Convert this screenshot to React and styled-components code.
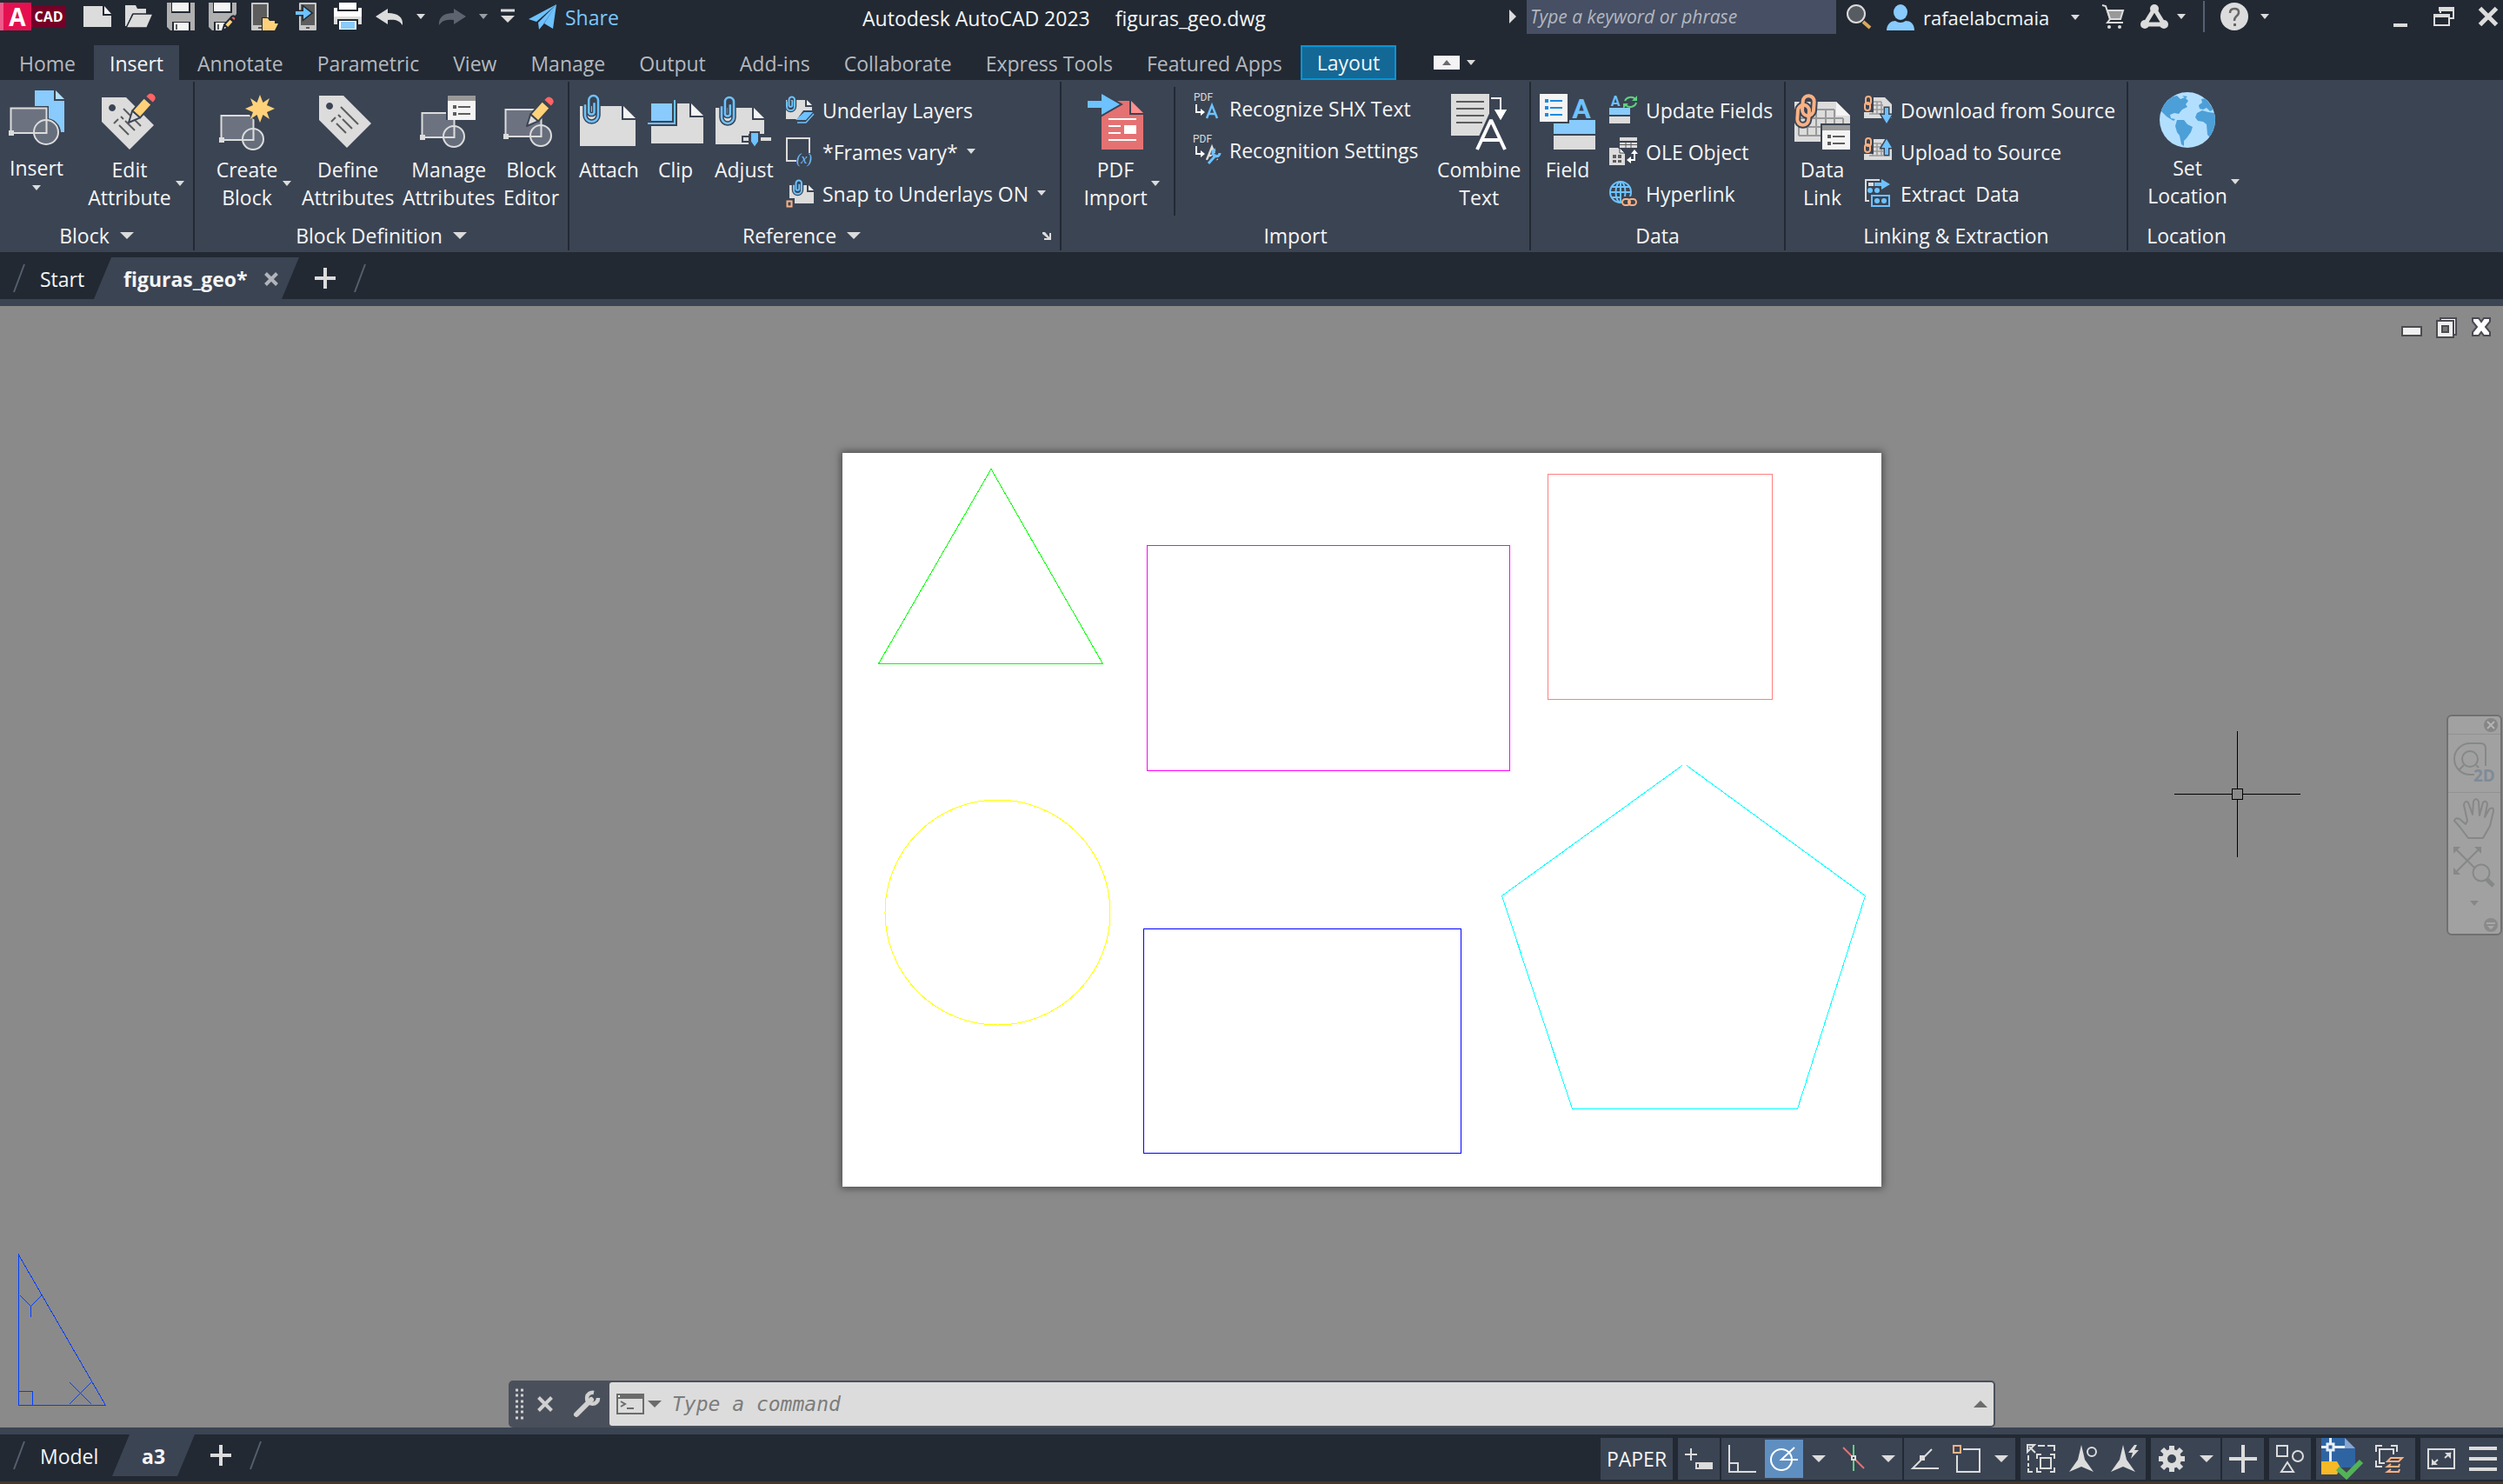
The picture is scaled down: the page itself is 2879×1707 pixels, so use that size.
import React from "react";
import styled, { createGlobalStyle } from "styled-components";

const c = {
  bar: "#222933",
  panel: "#3b4453",
  text: "#f5f5f5",
  muted: "#b5b9bf",
  light: "#dcdcdc",
  blue: "#88cbfc",
  sky: "#6dc2ff",
  yellow: "#ffd27a",
  red: "#ff6464",
  orange: "#f9b184",
  shade: "#6c7280",
  ink: "#5d5d5d",
};

const GlobalStyle = createGlobalStyle`
  * { box-sizing: border-box; }
  body { margin: 0; background: ${c.bar}; }
  body, button, input {
    font-family: "Open Sans", "Noto Sans", sans-serif;
    font-size: 23px;
    line-height: 32px;
  }
  button { margin: 0; padding: 0; border: 0; background: none; color: inherit; cursor: pointer; }
  svg { display: block; flex: none; }
`;

/* ---------- layout ---------- */

const Shell = styled.div`
  display: flex;
  flex-direction: column;
  min-height: 100vh;
  color: ${c.text};
  background: ${c.bar};
  border-bottom: 3px solid #40382f;
  white-space: nowrap;
`;

const TitleBar = styled.header`
  display: flex;
  align-items: center;
  height: 38px;
  margin-bottom: 14px;
`;

const Logo = styled.div`
  display: flex;
  align-items: center;
  margin-right: 12px;
  font-weight: 700;
`;

const LogoMark = styled.span`
  width: 36px;
  height: 32px;
  border-left: 4px solid #f0588a;
  background: #e51050;
  color: #fff;
  font-size: 28px;
  line-height: 32px;
  text-align: center;
`;

const LogoName = styled.span`
  width: 40px;
  height: 24px;
  background: #760027;
  color: #fff;
  font-size: 16px;
  line-height: 24px;
  text-align: center;
`;

const BarButton = styled.button`
  display: flex;
  align-items: center;
  justify-content: center;
  flex: none;
  width: ${(p) => p.$w || 48}px;
  height: 38px;
`;

const ShareButton = styled.button`
  display: flex;
  align-items: center;
  gap: 10px;
  padding: 2px 8px 0;
  color: #7bc8ff;
`;

const WindowTitle = styled.div`
  display: flex;
  flex: 1;
  justify-content: center;
  gap: 29px;
  padding-top: 4px;
`;

const SearchInput = styled.input`
  width: 356px;
  height: 39px;
  margin-left: 4px;
  padding: 0 4px;
  border: 0;
  background: #464f63;
  color: ${c.text};
  font-size: 21px;
  font-style: italic;
  &::placeholder { color: #b3b7c0; opacity: 1; }
`;

const AccountButton = styled.button`
  display: flex;
  align-items: center;
  gap: 10px;
  width: 236px;
  padding: 2px 8px 0 6px;
  font-size: 22px;
  & > :last-child { margin-left: auto; }
`;

const BarDivider = styled.span`
  width: 2px;
  height: 36px;
  margin: 0 14px 0 10px;
  background: #566075;
`;

const WindowButtons = styled.div`
  display: flex;
  margin-left: 116px;
  & > :last-child { margin-left: 8px; }
`;

const TabRow = styled.nav`
  display: flex;
  gap: 3px;
  height: 40px;
  padding-left: 4px;
`;

const RibbonTab = styled.button`
  padding: 2px 18px 0;
  color: ${(p) => (p.$active ? c.text : c.muted)};
  background: ${(p) => (p.$active ? c.panel : "none")};
`;

const ContextTab = styled(RibbonTab)`
  color: ${c.text};
  background: #146896;
  border: 2px solid #0696d7;
  padding: 0 17px;
`;

const RibbonToggle = styled.div`
  display: flex;
  align-items: center;
  gap: 8px;
  margin-left: 40px;
`;

const ToggleBox = styled.button`
  display: flex;
  align-items: center;
  justify-content: center;
  width: 30px;
  height: 16px;
  background: #f4f4f4;
`;

const Ribbon = styled.section`
  display: flex;
  padding: 2px 0;
  background: ${c.panel};
`;

const Panel = styled.section`
  display: flex;
  flex-direction: column;
  flex: none;
  width: ${(p) => p.$w}px;
  border-right: ${(p) => (p.$last ? "0" : `2px solid ${c.bar}`)};
`;

const PanelBody = styled.div`
  display: flex;
  gap: ${(p) => p.$gap || 12}px;
  height: 161px;
  padding: 0 ${(p) => (p.$last ? 0 : 10)}px 0 ${(p) => p.$pad || 10}px;
`;

const PanelTitle = styled.div`
  display: flex;
  align-items: center;
  justify-content: center;
  height: 32px;
  margin-bottom: 1px;
`;

const TitleButton = styled.button`
  display: flex;
  flex: 1;
  align-items: center;
  justify-content: center;
  gap: 12px;
`;

const Launcher = styled.button`
  display: flex;
  justify-content: center;
  width: 30px;
`;

const Tool = styled.button`
  display: flex;
  flex-direction: column;
  align-items: center;
  flex: none;
  gap: 7px;
  width: ${(p) => p.$w}px;
  padding-top: ${(p) => (p.$raised ? 12 : 14)}px;
`;

const ToolLabel = styled.span`
  display: grid;
  grid-template-columns: 1fr auto 1fr;
  align-items: center;
  width: 100%;
  & > :nth-child(2) { text-align: center; white-space: pre; }
  & > :nth-child(3) { justify-self: end; }
`;

const ToolStack = styled.span`
  display: flex;
  flex-direction: column;
  align-items: center;
  gap: 4px;
`;

const List = styled.div`
  display: flex;
  flex: 1;
  flex-direction: column;
  align-items: flex-start;
  padding-top: ${(p) => (p.$tight ? 6 : 8)}px;
  margin-left: 4px;
`;

const ListButton = styled.button`
  display: flex;
  align-items: center;
  gap: 10px;
  height: 48px;
`;

const ListText = styled.span`
  padding-top: 2px;
  white-space: pre;
`;

const InnerDivider = styled.span`
  width: 2px;
  height: 148px;
  margin: 6px 4px 0 4px;
  background: ${c.bar};
`;

const DocTabs = styled.div`
  display: flex;
  align-items: center;
  padding: 6px 0 0 15px;
  border-bottom: 8px solid ${c.panel};
`;

const PlainTab = styled.button`
  width: ${(p) => p.$w}px;
  height: 48px;
  padding: 2px 0 0 17px;
  text-align: left;
`;

const SlantTab = styled.div`
  display: flex;
  align-items: center;
  justify-content: space-between;
  width: ${(p) => p.$w}px;
  height: 48px;
  padding: 2px 24px 0 34px;
  background: ${c.panel};
  clip-path: polygon(20px 0, 100% 0, calc(100% - 20px) 100%, 0 100%);
  font-weight: 700;
`;

const AddButton = styled.button`
  display: flex;
  margin: 0 21px 0 18px;
`;

const Canvas = styled.main`
  position: relative;
  flex: 1;
  min-height: 1100px;
  background: #8a8a8a;
`;

const Paper = styled.div`
  position: absolute;
  left: 969px;
  top: 169px;
  background: #fff;
  box-shadow: 0 0 8px 2px rgba(40, 40, 40, 0.6);
`;

const Ucs = styled.div`
  position: absolute;
  left: 20px;
  bottom: 24px;
`;

const Crosshair = styled.div`
  position: absolute;
  left: 2501px;
  top: 489px;
`;

const ViewControls = styled.div`
  position: absolute;
  right: 13px;
  top: 12px;
  display: flex;
  gap: 16px;
`;

const NavBar = styled.div`
  position: absolute;
  right: 1px;
  top: 470px;
  display: flex;
  flex-direction: column;
  align-items: center;
  width: 64px;
  border: 2px solid #707070;
  border-radius: 6px;
  background: #a1a1a1;
`;

const NavCorner = styled.button`
  align-self: flex-end;
  display: flex;
  padding: 2px 3px 2px 0;
`;

const NavButton = styled.button`
  display: flex;
  justify-content: center;
  width: 100%;
  padding: ${(p) => p.$y || 4}px 0;
  border-top: ${(p) => (p.$line ? "1px solid #929292" : "0")};
`;

const CommandBar = styled.div`
  position: absolute;
  left: 585px;
  right: 584px;
  bottom: 0;
  display: flex;
  align-items: center;
  height: 54px;
  padding: 2px 2px 2px 8px;
  border-radius: 5px;
  background: #4a505b;
`;

const CommandTool = styled.button`
  display: flex;
  margin-left: ${(p) => p.$ml}px;
`;

const CommandField = styled.label`
  display: flex;
  flex: 1;
  align-items: center;
  height: 50px;
  margin-left: 11px;
  padding: 0 7px 0 8px;
  border-radius: 3px;
  background: #dcdcdc;
`;

const CommandInput = styled.input`
  flex: 1;
  margin: 0 12px;
  padding: 0;
  border: 0;
  background: none;
  color: #333;
  font-family: "DejaVu Sans Mono", monospace;
  font-size: 23px;
  font-style: italic;
  &::placeholder { color: #7c7c7c; opacity: 1; }
`;

const StatusBar = styled.footer`
  display: flex;
  justify-content: space-between;
  height: 62px;
  border-top: 8px solid ${c.panel};
`;

const LayoutTabs = styled.div`
  display: flex;
  align-items: center;
  height: 48px;
  padding-left: 15px;
`;

const StatusGroups = styled.div`
  display: flex;
  padding-top: 4px;
`;

const Group = styled.div`
  display: flex;
  height: 48px;
  margin-left: ${(p) => (p.$near ? 2 : 6)}px;
  padding: 0 ${(p) => p.$pad || 0}px;
  gap: ${(p) => p.$pad || 0}px;
  background: ${c.panel};
`;

const StatusButton = styled.button`
  display: flex;
  align-items: center;
  justify-content: center;
  width: ${(p) => p.$w || 48}px;
  height: 48px;
  border: ${(p) => (p.$on ? `2px solid ${c.panel}` : "0")};
  background: ${(p) => (p.$on ? "#5f8fc1" : "none")};
`;

const PaperButton = styled.button`
  width: 83px;
`;

/* ---------- icons ---------- */

const Icon = ({ s = 32, w, h, vb, children, ...rest }) => (
  <svg width={w || s} height={h || s} viewBox={vb || `0 0 ${w || s} ${h || s}`} fill="none" aria-hidden="true" overflow="visible" {...rest}>
    {children}
  </svg>
);

const Caret = ({ w = 10, h = 6, color = c.light }) => (
  <Icon w={w} h={h}><path d={`M0 0H${w}L${w / 2} ${h}Z`} fill={color} /></Icon>
);

const CaretUp = ({ w = 16, h = 8, color = "#6b6b6b" }) => (
  <Icon w={w} h={h}><path d={`M0 ${h}H${w}L${w / 2} 0Z`} fill={color} /></Icon>
);

const Slash = () => (
  <Icon w={14} h={32}><path d="M13 0L1 32" stroke="#56606e" strokeWidth="2" /></Icon>
);

const Plus = () => (
  <Icon s={24}><path d="M12 0V24M0 12H24" stroke={c.light} strokeWidth="4" /></Icon>
);

const Pencil = ({ x, y, k = 1, edge = c.panel }) => (
  <g transform={`translate(${x} ${y}) rotate(42) scale(${k})`} stroke={edge} strokeWidth={2 / k} strokeLinejoin="round">
    <path d="M0 0L-6 -13H6Z" fill={c.light} />
    <path d="M-6 -13V-33H6V-13Z" fill={c.yellow} />
    <path d="M-6 -35V-38Q-6 -44 0 -44Q6 -44 6 -38V-35Z" fill={c.red} />
  </g>
);

const Block = ({ y = 25, w = 37, h = 28, r = 12 }) => (
  <g>
    <rect x="2.5" y={y} width={w} height={h} fill={c.shade} stroke={c.light} strokeWidth="2" />
    <circle cx={w + 2} cy={y + h - 1} r={r} fill={c.shade} fillOpacity=".9" stroke={c.light} strokeWidth="2" />
    <path d={`M${w + 2.5} ${y + h - r}V${y + h}H${w + 2 - r}`} stroke={c.light} strokeWidth="2" />
    <rect x="0" y={y + h - 3} width="6" height="6" fill={c.light} />
  </g>
);

const Clip = ({ x = 0, y = 0, w = 16, h = 32, sw = 2.5 }) => {
  const r = w / 2;
  const d = `M${w * 0.7} ${h * 0.3}V${h * 0.66}A${r * 0.45} ${r * 0.45} 0 0 1 ${w * 0.28} ${h * 0.66}V${r * 0.85}A${r * 0.7} ${r * 0.7} 0 0 1 ${w} ${r * 0.85}V${h - r}A${r} ${r} 0 0 1 0 ${h - r}V${h * 0.36}`;
  return (
    <g transform={`translate(${x} ${y})`}>
      <path d={d} stroke={c.panel} strokeWidth={sw * 2.2} />
      <path d={d} stroke={c.sky} strokeWidth={sw} />
    </g>
  );
};

const Sheet = ({ x = 0, y = 0, w, h, f, fill = c.light, corner = "#f4f4f4" }) => (
  <g transform={`translate(${x} ${y})`}>
    <path d={`M0 0H${w - f - 2}V${f + 2}H${w}V${h}H0Z`} fill={fill} />
    <path d={`M${w - f} 0L${w} ${f}H${w - f}Z`} fill={corner} />
  </g>
);

const ListWindow = ({ x, y, w = 32, h = 28 }) => (
  <g transform={`translate(${x} ${y})`}>
    <rect x="-2" y="-2" width={w + 2} height={h + 2} fill={c.panel} />
    <rect width={w} height={h} fill="#f4f4f4" />
    <rect width={w} height="6" fill="#999" />
    <path d="M6 13H10M6 21H10" stroke={c.ink} strokeWidth="4" />
    <path d="M12 13H26M12 21H26" stroke={c.ink} strokeWidth="2" />
  </g>
);

const InsertIcon = () => (
  <Icon s={64}>
    <g transform="translate(0 -2)">
      <path d="M30 0H52V12H64V48H30Z" fill={c.blue} />
      <path d="M54 0L64 10H54Z" fill="#b3dfff" />
      <rect x="0" y="18" width="46" height="34" fill={c.panel} />
      <circle cx="43" cy="49" r="17" fill={c.panel} />
      <Block y={20.5} w={41} h={28.5} r={14} />
    </g>
  </Icon>
);

const tagBody = "M0 2H28L60 34L32 62L0 30ZM12 10a4 4 0 1 0 .1 0Z";

const TagIcon = ({ pencil }) => (
  <Icon s={64}>
    <g transform={pencil ? "translate(0 2)" : undefined}>
      <path d={tagBody} fill={c.light} fillRule="evenodd" />
      <path d="M25 15L45 35M22 24L25 27M27 29L38 40M19 27L14 32M20 34L31 45" stroke={c.ink} strokeWidth="2" />
    </g>
    {pencil && <Pencil x={31} y={33} />}
  </Icon>
);

const CreateBlockIcon = () => (
  <Icon s={64}>
    <Block />
    <circle cx="47" cy="17" r="14" fill={c.panel} />
    <path d="M47 1L50.500 10L58 5L55 13L64 17L55 21L58 29L50.500 24L47 33L43.500 24L36 29L39 21L30 17L39 13L36 5L43.500 10Z" fill={c.yellow} />
  </Icon>
);

const ManageIcon = () => (
  <Icon s={64}><Block y={22} /><ListWindow x={32} y={2} /></Icon>
);

const EditorIcon = () => (
  <Icon s={64}><Block y={18} w={41} h={31} /><Pencil x={27} y={37} /></Icon>
);

const AttachIcon = () => (
  <Icon s={64}><Sheet y={14} w={64} h={46} f={14} /><Clip x={6} y={1} w={15} h={31} /></Icon>
);

const ClipIcon = () => (
  <Icon s={64}>
    <Sheet x={4} y={11} w={60} h={46} f={14} />
    <path d="M0 34H31V7" stroke={c.panel} strokeWidth="6" />
    <rect x="4" y="11" width="24" height="20" fill={c.blue} />
    <path d="M0 34H31V7" stroke={c.sky} strokeWidth="2" />
  </Icon>
);

const AdjustIcon = () => (
  <Icon s={64}>
    <Sheet y={16} w={56} h={42} f={12} />
    <Clip x={7} y={3} w={14} h={31} />
    <rect x="38" y="46" width="26" height="12" fill={c.panel} />
    <path d="M44 49H31V55H44" stroke={c.panel} strokeWidth="2" />
    <rect x="52" y="50" width="12" height="4" fill={c.light} />
    <path d="M40 44H50V55L45 62L40 55Z" fill={c.sky} stroke={c.panel} strokeWidth="2" />
  </Icon>
);

const LayersIcon = () => (
  <Icon>
    <Sheet y={5} w={30} h={22} f={6} />
    <Clip x={1} y={1} w={9} h={16} sw={2} />
    <path d="M10 31L20 17H34V22L26 34H10Z" fill={c.panel} />
    <path d="M21 19H31L23 28H11Z" fill={c.sky} />
    <path d="M13 31H23L32 21" stroke={c.sky} strokeWidth="1.500" />
  </Icon>
);

const FramesIcon = () => (
  <Icon>
    <path d="M12 27H1V1H27V18" stroke={c.light} strokeWidth="2" />
    <text x="12" y="30" fill={c.sky} fontFamily="Liberation Serif, serif" fontStyle="italic" fontSize="16">(x)</text>
  </Icon>
);

const SnapIcon = () => (
  <Icon>
    <Sheet x={4} y={7} w={28} h={21} f={6} />
    <Clip x={9} y={1} w={9} h={16} sw={2} />
    <rect x="-2" y="22" width="12" height="12" fill={c.panel} />
    <rect x="1.500" y="25.500" width="5" height="6" stroke={c.orange} strokeWidth="2" />
  </Icon>
);

const PdfIcon = () => (
  <Icon s={64}>
    <Sheet x={16} y={8} w={48} h={56} f={14} fill="#e57272" corner="#ff8f8f" />
    <path d="M0 8H16V0L37 12L16 24V16H0Z" fill={c.sky} stroke={c.panel} strokeWidth="4" paintOrder="stroke" />
    <path d="M24 29H56M24 37H38M24 45H38M24 53H56" stroke="#fff" strokeWidth="2" />
    <rect x="42" y="36" width="14" height="10" fill="#fff" />
  </Icon>
);

const ShxIcon = ({ wrench }) => (
  <Icon>
    <text x={wrench ? 0 : 1} y="8" fill={c.light} fontSize="12" fontFamily="Roboto, sans-serif">PDF</text>
    <path d="M4 12V21H10" stroke="#fff" strokeWidth="2" />
    <path d="M9 17L14 21L9 25Z" fill="#fff" />
    <path d="M16 28L22 13L28 28M18 23H26" stroke={wrench ? c.light : c.sky} strokeWidth="2.500" />
    {wrench && <path d="M18 32L28 22" stroke={c.panel} strokeWidth="7" />}
    {wrench && <path d="M18 32L27 22M31 20a4 4 0 1 1 -5 -4" stroke={c.sky} strokeWidth="3" />}
  </Icon>
);

const CombineIcon = () => (
  <Icon s={64}>
    <path d="M0 0H44V26L34 48H0Z" fill={c.light} />
    <path d="M6 9H38M6 17H38M6 25H38M6 33H36" stroke={c.ink} strokeWidth="2" />
    <path d="M46 5H57V20" stroke="#fff" strokeWidth="2" />
    <path d="M50 18H64L57 30Z" fill="#fff" />
    <path d="M30 64L46 29L62 64" stroke={c.panel} strokeWidth="9" />
    <path d="M50 18H64L57 30Z" fill="#fff" />
    <path d="M30 64L46 30L62 64M36 53H56" stroke="#fff" strokeWidth="4" strokeLinejoin="bevel" />
  </Icon>
);

const FieldIcon = () => (
  <Icon s={64}>
    <rect x="16" y="30" width="48" height="16" fill={c.blue} />
    <rect x="-2" y="-2" width="36" height="36" fill={c.panel} />
    <rect width="32" height="32" fill="#f4f4f4" />
    <path d="M6 8H10M6 16H10M6 24H10" stroke="#1c8be0" strokeWidth="4" />
    <path d="M12 8H26M12 16H26M12 24H26" stroke="#1c8be0" strokeWidth="2" />
    <text x="48" y="28" textAnchor="middle" fill={c.sky} fontSize="32" fontWeight="700" fontFamily="Roboto, sans-serif">A</text>
    <rect x="16" y="48" width="48" height="16" fill={c.light} />
  </Icon>
);

const UpdateFieldsIcon = () => (
  <Icon>
    <text x="7" y="12" textAnchor="middle" fill={c.sky} fontSize="16" fontWeight="700" fontFamily="Roboto, sans-serif">A</text>
    <path d="M18 6a7 6 0 0 1 12 -2M31 8a7 6 0 0 1 -12 3" stroke="#5fd27f" strokeWidth="2" />
    <path d="M32 0V6H26ZM16 15V9H22Z" fill="#5fd27f" />
    <rect y="14" width="24" height="8" fill={c.blue} />
    <rect y="24" width="24" height="8" fill={c.light} />
  </Icon>
);

const OleIcon = () => (
  <Icon>
    <rect x="12" y="0" width="20" height="4" fill={c.light} />
    <path d="M12 6H32V12H12Z" fill={c.light} />
    <path d="M12 8.500H32M19 6V12M25 6V12" stroke={c.ink} strokeWidth="1" />
    <path d="M0 12H10L18 19V32H0Z" fill={c.light} />
    <path d="M12 12L18 18H12Z" fill="#fff" stroke={c.panel} strokeWidth="1" />
    <path d="M4 20H8V24H4ZM10 20H14V24H10ZM4 26H8V29H4ZM10 26H14V29H10Z" fill={c.ink} />
    <path d="M29 18V26H24" stroke="#fff" strokeWidth="2" />
    <path d="M25 19L29 14L33 19ZM25 22L20 26L25 30Z" fill="#fff" />
  </Icon>
);

const Chain = ({ t, sw = 3 }) => (
  <g transform={t}>
    <rect x="6" y="1" width="13" height="23" rx="6.500" stroke={c.panel} strokeWidth={sw + 4} />
    <rect x="1" y="12" width="13" height="23" rx="6.500" stroke={c.panel} strokeWidth={sw + 4} />
    <rect x="6" y="1" width="13" height="23" rx="6.500" stroke={c.orange} strokeWidth={sw} />
    <rect x="1" y="12" width="13" height="23" rx="6.500" stroke={c.orange} strokeWidth={sw} />
  </g>
);

const HyperlinkIcon = () => (
  <Icon>
    <g stroke={c.sky} strokeWidth="2">
      <circle cx="13" cy="15" r="12" />
      <ellipse cx="13" cy="15" rx="5.500" ry="12" />
      <path d="M13 3V27M1 15H25M3 9H23M3 21H23" />
    </g>
    <rect x="14" y="20" width="20" height="12" fill={c.panel} />
    <rect x="15" y="23" width="9" height="7" rx="3.500" stroke={c.orange} strokeWidth="2" />
    <rect x="22" y="23" width="9" height="7" rx="3.500" stroke={c.orange} strokeWidth="2" />
  </Icon>
);

const DataLinkIcon = () => (
  <Icon s={64}>
    <path d="M0 9H48L64 25V55H0Z" fill={c.light} />
    <path d="M48 9L64 25H48Z" fill="#f4f4f4" />
    <path d="M5 48H30M5 38H30M5 28H56M25 18H46M5 28V48M15 28V48M25 18V48M36 18V38M46 18V38M56 28V38" stroke="#999" strokeWidth="2" />
    <Chain t="translate(3 1) rotate(4 10 18)" sw={4} />
    <ListWindow x={32} y={36} />
  </Icon>
);

const SourceIcon = ({ up }) => (
  <Icon>
    <path d="M0 2H24L32 10V26H0Z" fill={c.light} />
    <path d="M6 21H22M6 16H22M6 11H22M10 7H20M10 7V21M15 7V21M20 7V21" stroke="#999" strokeWidth="1.500" />
    <rect x="-1" y="-1" width="12" height="20" fill={c.panel} />
    <rect x="2" y="1" width="6" height="9" rx="3" stroke={c.orange} strokeWidth="2" />
    <rect x="1" y="8" width="6" height="9" rx="3" stroke={c.orange} strokeWidth="2" />
    <path
      d={up ? "M26 2L32 12H28V20H24V12H20Z" : "M26 32L32 22H28V14H24V22H20Z"}
      fill={c.sky} stroke={c.panel} strokeWidth="3" paintOrder="stroke"
    />
  </Icon>
);

const ExtractIcon = () => (
  <Icon>
    <path d="M18 1H2V25H6" stroke={c.light} strokeWidth="2" />
    <rect x="5" y="4" width="6" height="4" fill={c.light} />
    <path d="M12 4H20V0L30 6L20 12V8H12Z" fill={c.sky} />
    <circle cx="7" cy="13" r="3" fill={c.sky} /><circle cx="15" cy="13" r="3" fill={c.sky} />
    <rect x="9" y="19" width="20" height="12" fill={c.panel} stroke={c.sky} strokeWidth="2" />
    <circle cx="15" cy="25" r="3" fill={c.sky} /><circle cx="23" cy="25" r="3" fill={c.sky} />
  </Icon>
);

const GlobeIcon = () => (
  <Icon s={64}>
    <clipPath id="globe"><circle cx="32" cy="32" r="32" /></clipPath>
    <circle cx="32" cy="32" r="32" fill="#b3dfff" />
    <g clipPath="url(#globe)" fill="#4d9fd8">
      <path d="M12 6L20 4L24 8L29 6L33 10L30 14L32 17L26 20L22 25L17 24L12 26L13 30L18 31L16 33L8 28L4 24L0 20Z" />
      <path d="M20 32L28 32L32 37L38 40L36 46L31 53L28 56L28 62L25 60L23 50L20 46L18 39Z" />
      <path d="M43 24L49 21L56 23L64 24V40L58 52L55 49L54 37L50 34L44 33L41 29Z" />
      <path d="M46 19L45 15L49 12L48 8L53 7L62 20L58 22L54 18L50 20Z" />
      <path d="M26 4L32 5L30 7Z" />
    </g>
  </Icon>
);

const FileNew = () => <Icon><path d="M0 4H22V15H32V28H0Z" fill={c.light} /><path d="M24 4L32 13H24Z" fill="#f4f4f4" /></Icon>;
const FileOpen = () => <Icon><path d="M0 3H12L14 7H24V13H8L2 27H0Z" fill={c.light} /><path d="M9 13H32L25 29H1Z" fill={c.light} stroke={c.bar} strokeWidth="1.500" /></Icon>;
const Save = ({ edit }) => (
  <Icon>
    <path d="M0 0H5V13H27V0H32V32H27V21H6V32H4L0 28Z" fill="#b0b0b0" />
    <rect x="5" y="12" width="22" height="10" fill="#b0b0b0" />
    <rect x="6" y="0" width="19" height="10" fill="#f4f4f4" />
    <rect x="8" y="23" width="17" height="9" fill="#f4f4f4" />
    <path d="M11 25V31" stroke={c.ink} strokeWidth="2" />
    {edit && <path d="M15 34L32 13V34Z" fill={c.bar} />}
    {edit && <Pencil x={16} y={32} k={0.48} edge={c.bar} />}
  </Icon>
);
const Mobile = ({ save }) => (
  <Icon>
    <rect x={save ? 8 : 1} y="0" width="20" height="32" rx="1" fill="#c8c8c8" />
    <rect x={save ? 10 : 3} y="2" width="16" height="24" fill={c.ink} />
    <rect x={save ? 16 : 9} y="28" width="4" height="2" fill={c.ink} />
    {save
      ? <path d="M4 10H13V5L22 12L13 19V14H4Z" fill={c.sky} stroke={c.bar} strokeWidth="3" paintOrder="stroke" />
      : <path d="M14 18H20L22 21H28V24H32L28 32H14Z" fill={c.yellow} stroke={c.bar} strokeWidth="2" paintOrder="stroke" />}
  </Icon>
);
const Print = () => (
  <Icon>
    <rect x="6" y="0" width="20" height="8" fill="#fff" />
    <path d="M0 6H4V10H28V6H32V16H0Z" fill="#fff" />
    <rect y="16" width="32" height="9" fill={c.light} />
    <rect x="5" y="20" width="22" height="12" fill="#fff" stroke={c.bar} strokeWidth="2" />
    <rect x="8" y="22" width="16" height="8" fill={c.blue} />
  </Icon>
);
const Undo = ({ flip, color = c.light }) => (
  <Icon><path transform={flip ? "translate(32 0) scale(-1 1)" : undefined} d="M0 16L14 7V12C26 12 32 17 31 26C27 20 22 19 14 20V25Z" fill={color} /></Icon>
);
const Customize = () => <Icon w={16} h={16}><path d="M0 1H16" stroke={c.light} strokeWidth="3" /><path d="M0 7H16L8 15Z" fill={c.light} /></Icon>;
const Send = () => <Icon><path d="M32 1L0 18L9 21ZM32 1L11 22L12 30L17 24ZM32 1L18 23L28 29Z" fill={c.sky} /></Icon>;
const Search = () => <Icon s={28}><path d="M19 20L27 27" stroke="#dba95c" strokeWidth="4" /><circle cx="11" cy="11" r="10" fill="#575c63" stroke={c.light} strokeWidth="2" /></Icon>;
const User = () => <Icon><ellipse cx="16" cy="10" rx="8" ry="9" fill={c.blue} /><path d="M0 31C0 23 6 20 10 20Q16 24 22 20C27 20 32 23 32 31Z" fill={c.blue} /></Icon>;
const Cart = () => (
  <Icon w={26} h={28}>
    <path d="M6 7H24L21 17H9Z" fill="#999" stroke={c.light} strokeWidth="2" />
    <path d="M0 1L4 2L9 17L6 21H24" stroke={c.light} strokeWidth="2" />
    <circle cx="8" cy="26" r="2" fill={c.light} /><circle cx="20" cy="26" r="2" fill={c.light} />
  </Icon>
);
const AppStore = () => (
  <Icon w={32} h={28}>
    <path d="M16 5L5 23H27Z" stroke={c.light} strokeWidth="5" />
    <circle cx="16" cy="5" r="5" fill={c.light} /><circle cx="5" cy="23" r="5" fill={c.light} /><circle cx="27" cy="23" r="5" fill={c.light} />
  </Icon>
);
const Help = () => (
  <Icon>
    <circle cx="16" cy="16" r="16" fill={c.light} />
    <path d="M11 12Q11 7 16 7Q21 7 21 11Q21 14 18 16Q16 18 16 21" stroke="#666" strokeWidth="2.500" />
    <rect x="15" y="24" width="3" height="3" fill="#666" />
  </Icon>
);
const Minimize = () => <Icon w={16} h={24}><rect y="20" width="16" height="4" fill={c.light} /></Icon>;
const Restore = () => (
  <Icon w={24} h={22}>
    <path d="M8 7V2H23V13H18" stroke={c.light} strokeWidth="2" /><path d="M6 2.500H24" stroke={c.light} strokeWidth="5" />
    <rect x="1" y="9" width="17" height="12" fill={c.bar} stroke={c.light} strokeWidth="2" /><path d="M0 10H19" stroke={c.light} strokeWidth="4" />
  </Icon>
);
const Cross = ({ s = 16, sw = 4, color = "#b0b4bb" }) => (
  <Icon s={s}><path d={`M1.500 1.500L${s - 1.5} ${s - 1.5}M${s - 1.5} 1.500L1.500 ${s - 1.5}`} stroke={color} strokeWidth={sw} /></Icon>
);
const LaunchIcon = () => <Icon s={10}><path d="M0 1H3L8 7V2H10V10H2V8H6L0 3Z" fill={c.light} /></Icon>;

/* ---------- canvas drawings ---------- */

const PaperDrawing = () => (
  <Icon w={1195} h={844} vb="969 521 1195 844" shapeRendering="crispEdges" role="img" aria-label="Geometric figures">
    <path d="M1140 539.500L1010.500 763.500H1268.500Z" stroke="#00ff00" />
    <rect x="1319.500" y="627.500" width="417" height="259" stroke="#ff00ff" />
    <rect x="1780.500" y="545.500" width="258" height="259" stroke="#ff7f7f" />
    <circle cx="1147.500" cy="1049.500" r="129.500" stroke="#ffff00" />
    <rect x="1315.500" y="1068.500" width="365" height="258" stroke="#0000ff" />
    <path d="M1935 880.500L1727.500 1030.500L1808.500 1275.500H2067.500L2145.500 1030.500L1940 880.500" stroke="#00ffff" />
  </Icon>
);

const UcsDrawing = () => (
  <Icon w={102} h={176} vb="20 1442 102 176" stroke="#0040ff" shapeRendering="crispEdges">
    <path d="M21.500 1443.500V1616.500H121.500ZM21.500 1600.500H37.500V1616.500" />
    <path d="M23 1490L35.500 1502.500L48 1490M35.500 1502.500V1515M80 1590L105 1615M80 1615L106 1589" />
  </Icon>
);

const CrosshairDrawing = () => (
  <Icon s={145} stroke="#000" shapeRendering="crispEdges">
    <path d="M0 72.500H66M79 72.500H145M72.500 0V66M72.500 79V145M66.500 66.500H78.500V78.500H66.500Z" />
  </Icon>
);

const ViewMin = () => <Icon s={24}><rect x="1" y="12" width="22" height="10" fill="#f0f0f0" stroke="#4a4a52" strokeWidth="2" /></Icon>;
const ViewRestore = () => (
  <Icon s={24}>
    <rect x="5" y="2" width="18" height="19" fill="#fff" stroke="#4a4a52" strokeWidth="2" />
    <rect x="1" y="5" width="19" height="19" fill="#eee" stroke="#4a4a52" strokeWidth="2" />
    <rect x="7" y="11" width="7" height="7" fill="#777" stroke="#4a4a52" strokeWidth="2" />
  </Icon>
);
const ViewClose = () => (
  <Icon s={24}>
    <path d="M2 2H9L12 6L15 2H22V6L17 12L22 18V22H15L12 18L9 22H2V18L7 12L2 6Z" fill="#fff" stroke="#4a4a52" strokeWidth="2" />
  </Icon>
);

const NavClose = () => <Icon s={16}><circle cx="8" cy="8" r="8" fill="#868686" /><path d="M4 4L12 12M12 4L4 12" stroke="#b4b4b4" strokeWidth="2" /></Icon>;
const NavMenu = () => <Icon s={16}><circle cx="8" cy="8" r="8" fill="#8a8a8a" /><path d="M3 6H13" stroke="#a8a8a8" strokeWidth="2" /><path d="M4 9H12L8 13Z" fill="#a8a8a8" /></Icon>;
const Wheel = () => (
  <Icon s={48} stroke="#868888" strokeWidth="2">
    <path d="M37 27V7Q37 1 31 1H19A18 18 0 0 0 19 37H24" />
    <circle cx="19" cy="19" r="9" />
    <path d="M12 26L6 32M26 26L29 29" />
    <text x="23" y="45" fill="#7f8b98" stroke="none" fontSize="19" fontWeight="700" fontFamily="Open Sans, sans-serif">2D</text>
  </Icon>
);
const Hand = () => (
  <Icon s={48} stroke="#868888" strokeWidth="2" strokeLinejoin="round">
    <path d="M17 46L8 34L1 26Q2 22 7 24L14 30L16 26L12 8Q13 2 17 5L22 19L23 4Q26 -2 29 4L30 20L34 5Q38 2 39 7L36 22L41 13Q46 9 46 15L42 32L34 46Z" />
  </Icon>
);
const ZoomExtents = () => (
  <Icon s={48} stroke="#868888" strokeWidth="2">
    <path d="M3 3L24 24M29 3L3 29" />
    <path d="M0 0H8L0 8ZM32 0H24L32 8ZM0 32V24L8 32Z" fill="#868888" stroke="none" />
    <circle cx="32" cy="30" r="9.500" fill="#a1a1a1" /><path d="M38 37L46 45" strokeWidth="5" />
  </Icon>
);

const Grip = () => (
  <Icon w={9} h={36}>
    {[1, 7, 14, 20, 26, 33].map((y) => <path key={y} d={`M0 ${y + 1}H3M6 ${y + 1}H9`} stroke="#d0d0d0" strokeWidth="3" />)}
  </Icon>
);
const Wrench = () => (
  <Icon s={30}><path d="M3 27L20 10" stroke="#d0d0d0" strokeWidth="6" strokeLinecap="round" /><path d="M23 2A6.500 6.500 0 1 0 28 8" stroke="#d0d0d0" strokeWidth="4.500" /></Icon>
);
const Prompt = () => (
  <Icon w={32} h={24}>
    <rect x="1" y="1" width="30" height="22" stroke="#6b6b6b" strokeWidth="2" /><path d="M0 3H32" stroke="#6b6b6b" strokeWidth="6" /><rect x="2" y="2" width="2" height="2" fill="#fff" />
    <path d="M5 9L10 12L5 15M12 17H20" stroke="#6b6b6b" strokeWidth="2" />
  </Icon>
);

/* ---------- status icons ---------- */

const line = { stroke: c.light, strokeWidth: 2 };

const StDyn = () => <Icon {...line}><path d="M0 11H14M7 4V18" /><rect x="12" y="20" width="20" height="8" fill={c.light} stroke="none" /><path d="M15 22V26" stroke={c.panel} /></Icon>;
const StOrtho = () => <Icon {...line}><path d="M1 0V31H32M1 21H11V31" /></Icon>;
const StPolar = () => <Icon stroke="#fff" strokeWidth="2"><circle cx="13" cy="17" r="12" /><path d="M32 17H13L28 3" /></Icon>;
const StIso = () => <Icon><path d="M4 3L28 27" stroke="#e57272" strokeWidth="2" /><path d="M16 0V30" stroke="#5fd27f" strokeWidth="2" /><rect x="14" y="13" width="4" height="4" fill={c.panel} {...line} /></Icon>;
const StTrack = () => <Icon {...line}><path d="M24 5L2 27H32" /><rect x="10" y="12" width="6" height="6" fill={c.light} stroke="none" /></Icon>;
const StOsnap = () => <Icon {...line}><path d="M12 5H31V31H5V12" /><rect x="1" y="1" width="8" height="8" stroke={c.orange} /></Icon>;
const StScale = () => (
  <Icon {...line}>
    <path d="M12 1H20M23 1H31V7M1 12V18M1 21V25M1 27V31H6M0 0H8L0 8ZM2 2L9 9" />
    <path d="M11 16V11H16M26 11H31V16M31 26V31H26M16 31H11V26" /><rect x="15" y="15" width="12" height="12" />
  </Icon>
);
const compass = "M14 0L18 17L28 31L14 25L0 31L10 17Z";
const StAnno = () => <Icon><path d={compass} fill={c.light} /><circle cx="26" cy="8" r="5" {...line} /></Icon>;
const StAuto = () => <Icon><path d={compass} fill={c.light} /><path d="M27 0L20 9H25L23 16L32 6H27L30 0Z" fill={c.light} /></Icon>;
const StGear = () => (
  <Icon>
    <path d="M16 1V31M1 16H31M5 5L27 27M27 5L5 27" stroke={c.light} strokeWidth="6" /><circle cx="16" cy="16" r="11" fill={c.light} /><circle cx="16" cy="16" r="5" fill={c.panel} />
  </Icon>
);
const StPlus = () => <Icon><path d="M16 0V32M0 16H32" stroke={c.light} strokeWidth="4" /></Icon>;
const StShapes = () => <Icon {...line}><rect x="1" y="1" width="12" height="12" /><circle cx="25" cy="13" r="6" /><path d="M13 20L6 31H20Z" /></Icon>;
const StTrusted = () => (
  <Icon s={48}>
    <path d="M0 0H27L39 12V34H0Z" fill="#2f64a3" /><path d="M27 0L39 12H27Z" fill="#88a6d0" />
    <path d="M0 27H18L22 34L18 42H0Z" fill="#f6b927" />
    <path d="M10.500 0V27M0 10.500H27" stroke="#e8eef6" strokeWidth="3" /><rect x="7" y="7" width="7" height="7" fill="#2f64a3" stroke="#e8eef6" strokeWidth="3" />
    <path d="M19 35L29 44L46 27" stroke="#52b356" strokeWidth="6" />
  </Icon>
);
const StIsolate = () => (
  <Icon {...line}>
    <path d="M1 8V1H8M18 1H25V8M1 18V25H8" /><path d="M11 21H5V5H21V11" />
    <path d="M18 15H31L27 19H14ZM28 22L27 25H14L18 22M28 28L27 31H14L18 28" stroke={c.orange} />
  </Icon>
);
const StClean = () => <Icon {...line}><rect x="1" y="5" width="30" height="22" /><path d="M5 16L12 23H5ZM27 16L20 9H27Z" fill={c.light} stroke="none" /><path d="M5 23L12 17M27 9L20 15" /></Icon>;
const StMenu = () => <Icon><path d="M0 4H32M0 16H32M0 28H32" stroke={c.light} strokeWidth="4" /></Icon>;

/* ---------- parts ---------- */

const BigTool = ({ icon, label, w, caret, below, raised }) => (
  <Tool $w={w} $raised={raised}>
    {icon}
    {below ? (
      <ToolStack><span>{label}</span><Caret /></ToolStack>
    ) : (
      <ToolLabel><span /><span>{label}</span><span>{caret && <Caret />}</span></ToolLabel>
    )}
  </Tool>
);

const SmallTool = ({ icon, label, caret }) => (
  <ListButton>{icon}<ListText>{label}</ListText>{caret && <Caret />}</ListButton>
);

const RibbonPanel = ({ title, w, gap, pad, menu, launcher, last, children }) => (
  <Panel $w={w} $last={last} aria-label={title}>
    <PanelBody $gap={gap} $pad={pad} $last={last}>{children}</PanelBody>
    <PanelTitle>
      {menu ? <TitleButton>{title}<Caret w={16} h={8} /></TitleButton> : <span>{title}</span>}
      {launcher && <Launcher aria-label="Reference settings"><LaunchIcon /></Launcher>}
    </PanelTitle>
  </Panel>
);

const quickTools = [
  ["New", <FileNew />], ["Open", <FileOpen />], ["Save", <Save />], ["Save As", <Save edit />],
  ["Open from Web & Mobile", <Mobile />], ["Save to Web & Mobile", <Mobile save />], ["Plot", <Print />],
];

const ribbonTabs = ["Home", "Insert", "Annotate", "Parametric", "View", "Manage", "Output", "Add-ins", "Collaborate", "Express Tools", "Featured Apps"];

const statusGroups = [
  { items: [["Dynamic input", <StDyn />]] },
  { near: true, items: [["Ortho mode", <StOrtho />], ["Polar tracking", <StPolar />, 48, true], ["Polar options", <Caret w={16} h={8} />, 32], ["Isometric drafting", <StIso />], ["Isometric options", <Caret w={16} h={8} />, 32]] },
  { near: true, items: [["Object snap tracking", <StTrack />], ["Object snap", <StOsnap />], ["Snap options", <Caret w={16} h={8} />, 32]] },
  { items: [["Scale", <StScale />], ["Annotation visibility", <StAnno />], ["Auto scale", <StAuto />]] },
  { items: [["Workspace", <StGear />], ["Workspace options", <Caret w={16} h={8} />, 32]] },
  { near: true, items: [["Annotation monitor", <StPlus />]] },
  { items: [["Isolate objects", <StShapes />]] },
  { pad: 6, items: [["Trusted DWG", <StTrusted />], ["Layer isolate", <StIsolate />]] },
  { items: [["Clean screen", <StClean />], ["Customization", <StMenu />, 47]] },
];

export default function App() {
  return (
    <Shell>
      <GlobalStyle />
      <TitleBar>
        <Logo><LogoMark>A</LogoMark><LogoName>CAD</LogoName></Logo>
        {quickTools.map(([name, icon]) => <BarButton key={name} aria-label={name}>{icon}</BarButton>)}
        <BarButton aria-label="Undo"><Undo /></BarButton>
        <BarButton $w={24} aria-label="Undo history"><Caret /></BarButton>
        <BarButton aria-label="Redo"><Undo flip color="#5d646f" /></BarButton>
        <BarButton $w={24} aria-label="Redo history"><Caret color="#9a9da2" /></BarButton>
        <BarButton $w={32} aria-label="Customize toolbar"><Customize /></BarButton>
        <ShareButton><Send />Share</ShareButton>
        <WindowTitle><span>Autodesk AutoCAD 2023</span><span>figuras_geo.dwg</span></WindowTitle>
        <BarButton $w={24} aria-label="Collapse search"><Icon w={8} h={16}><path d="M0 0L8 8L0 16Z" fill={c.light} /></Icon></BarButton>
        <SearchInput aria-label="Search" placeholder="Type a keyword or phrase" />
        <BarButton $w={52} aria-label="Search"><Search /></BarButton>
        <AccountButton><User /><span>rafaelabcmaia</span><Caret /></AccountButton>
        <BarButton $w={62} aria-label="Store"><Cart /></BarButton>
        <BarButton $w={32} aria-label="App Store"><AppStore /></BarButton>
        <BarButton $w={30} aria-label="App Store menu"><Caret /></BarButton>
        <BarDivider />
        <BarButton $w={40} aria-label="Help"><Help /></BarButton>
        <BarButton $w={30} aria-label="Help menu"><Caret /></BarButton>
        <WindowButtons>
          <BarButton $w={50} aria-label="Minimize"><Minimize /></BarButton>
          <BarButton $w={50} aria-label="Restore"><Restore /></BarButton>
          <BarButton $w={35} aria-label="Close"><Cross s={22} sw={5} color={c.light} /></BarButton>
        </WindowButtons>
      </TitleBar>

      <TabRow>
        {ribbonTabs.map((t) => <RibbonTab key={t} $active={t === "Insert"}>{t}</RibbonTab>)}
        <ContextTab>Layout</ContextTab>
        <RibbonToggle>
          <ToggleBox aria-label="Minimize ribbon"><CaretUp w={10} h={6} /></ToggleBox>
          <button aria-label="Ribbon options"><Caret /></button>
        </RibbonToggle>
      </TabRow>

      <Ribbon>
        <RibbonPanel title="Block" w={224} gap={7} pad={5} menu>
          <BigTool icon={<InsertIcon />} label="Insert" w={74} below raised />
          <BigTool icon={<TagIcon pencil />} label={"Edit\nAttribute"} w={126} caret />
        </RibbonPanel>
        <RibbonPanel title="Block Definition" w={431} pad={9} menu>
          <BigTool icon={<CreateBlockIcon />} label={"Create\nBlock"} w={102} caret />
          <BigTool icon={<TagIcon />} label={"Define\nAttributes"} w={104} />
          <BigTool icon={<ManageIcon />} label={"Manage\nAttributes"} w={104} />
          <BigTool icon={<EditorIcon />} label={"Block\nEditor"} w={64} />
        </RibbonPanel>
        <RibbonPanel title="Reference" w={566} pad={11} menu launcher>
          <BigTool icon={<AttachIcon />} label="Attach" w={66} />
          <BigTool icon={<ClipIcon />} label="Clip" w={66} />
          <BigTool icon={<AdjustIcon />} label="Adjust" w={66} />
          <List>
            <SmallTool icon={<LayersIcon />} label="Underlay Layers" />
            <SmallTool icon={<FramesIcon />} label="*Frames vary*" caret />
            <SmallTool icon={<SnapIcon />} label="Snap to Underlays ON" caret />
          </List>
        </RibbonPanel>
        <RibbonPanel title="Import" w={540} pad={11}>
          <BigTool icon={<PdfIcon />} label={"PDF\nImport"} w={102} caret />
          <InnerDivider />
          <List $tight>
            <SmallTool icon={<ShxIcon />} label="Recognize SHX Text" />
            <SmallTool icon={<ShxIcon wrench />} label="Recognition Settings" />
          </List>
          <BigTool icon={<CombineIcon />} label={"Combine\nText"} w={96} />
        </RibbonPanel>
        <RibbonPanel title="Data" w={293}>
          <BigTool icon={<FieldIcon />} label="Field" w={64} />
          <List>
            <SmallTool icon={<UpdateFieldsIcon />} label="Update Fields" />
            <SmallTool icon={<OleIcon />} label="OLE Object" />
            <SmallTool icon={<HyperlinkIcon />} label="Hyperlink" />
          </List>
        </RibbonPanel>
        <RibbonPanel title="Linking & Extraction" w={394}>
          <BigTool icon={<DataLinkIcon />} label={"Data\nLink"} w={64} />
          <List>
            <SmallTool icon={<SourceIcon />} label="Download from Source" />
            <SmallTool icon={<SourceIcon up />} label="Upload to Source" />
            <SmallTool icon={<ExtractIcon />} label="Extract  Data" />
          </List>
        </RibbonPanel>
        <RibbonPanel title="Location" w={134} pad={8} last>
          <BigTool icon={<GlobeIcon />} label={"Set\nLocation"} w={120} caret raised />
        </RibbonPanel>
      </Ribbon>

      <DocTabs>
        <Slash />
        <PlainTab $w={79}>Start</PlainTab>
        <SlantTab $w={236}><span>figuras_geo*</span><button aria-label="Close figuras_geo"><Cross /></button></SlantTab>
        <AddButton aria-label="New drawing"><Plus /></AddButton>
        <Slash />
      </DocTabs>

      <Canvas>
        <ViewControls>
          <button aria-label="Minimize drawing"><ViewMin /></button>
          <button aria-label="Restore drawing"><ViewRestore /></button>
          <button aria-label="Close drawing"><ViewClose /></button>
        </ViewControls>
        <Paper><PaperDrawing /></Paper>
        <Ucs><UcsDrawing /></Ucs>
        <Crosshair><CrosshairDrawing /></Crosshair>
        <NavBar>
          <NavCorner aria-label="Close navigation bar"><NavClose /></NavCorner>
          <NavButton $line $y={9} aria-label="Steering wheel"><Wheel /></NavButton>
          <NavButton $line $y={6} aria-label="Pan"><Hand /></NavButton>
          <NavButton $y={2} aria-label="Zoom extents"><ZoomExtents /></NavButton>
          <NavButton $y={12} aria-label="Zoom options"><Caret color="#868888" /></NavButton>
          <NavCorner aria-label="Navigation bar menu"><NavMenu /></NavCorner>
        </NavBar>
        <CommandBar>
          <Grip />
          <CommandTool $ml={16} aria-label="Close command line"><Cross s={18} sw={4} color="#d0d0d0" /></CommandTool>
          <CommandTool $ml={24} aria-label="Command line settings"><Wrench /></CommandTool>
          <CommandField>
            <Prompt />
            <CommandTool as="span" $ml={4}><Caret w={16} h={8} color="#6b6b6b" /></CommandTool>
            <CommandInput aria-label="Command" placeholder="Type a command" />
            <CaretUp />
          </CommandField>
        </CommandBar>
      </Canvas>

      <StatusBar>
        <LayoutTabs>
          <Slash />
          <PlainTab $w={100}>Model</PlainTab>
          <SlantTab $w={95}><span>a3</span></SlantTab>
          <AddButton aria-label="New layout"><Plus /></AddButton>
          <Slash />
        </LayoutTabs>
        <StatusGroups>
          <Group><PaperButton>PAPER</PaperButton></Group>
          {statusGroups.map((g, i) => (
            <Group key={i} $near={g.near} $pad={g.pad}>
              {g.items.map(([name, icon, w, on]) => (
                <StatusButton key={name} $w={w} $on={on} aria-label={name} aria-pressed={on}>{icon}</StatusButton>
              ))}
            </Group>
          ))}
        </StatusGroups>
      </StatusBar>
    </Shell>
  );
}
